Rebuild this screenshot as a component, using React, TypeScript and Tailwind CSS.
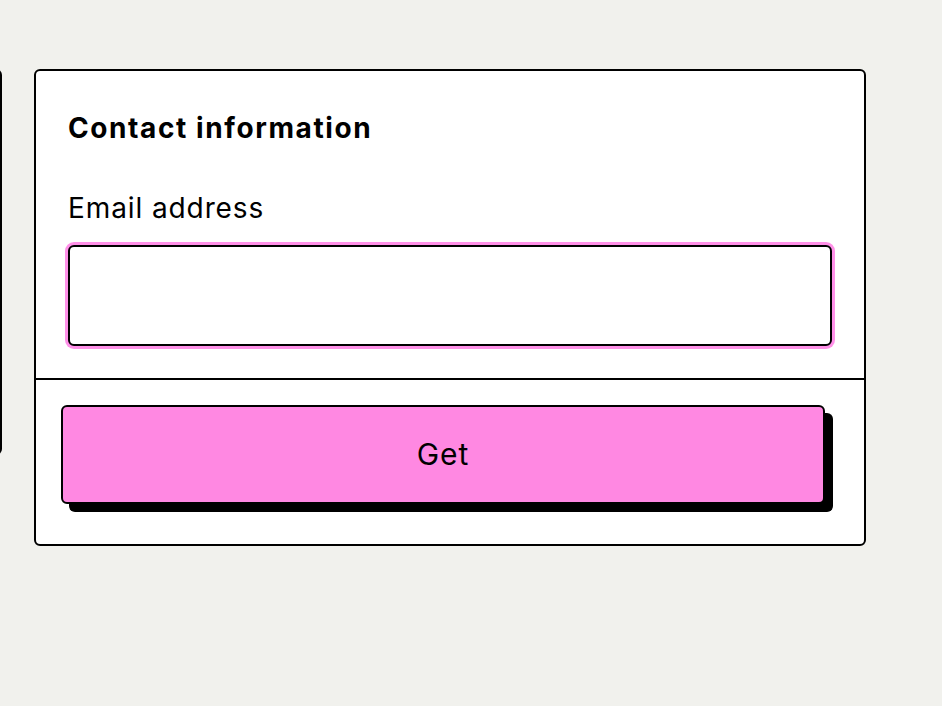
import { useState } from "react";

export default function App() {
  const [email, setEmail] = useState("");

  return (
    <div className="min-h-screen w-full overflow-hidden bg-[#f1f1ed] font-['Inter',sans-serif] text-black">
      <div className="flex items-start gap-[32px] pt-[69px]">
        {/* card partly off screen on the left */}
        <div className="-ml-[400px] h-[386px] w-[402px] shrink-0 rounded-md border-2 border-black bg-white" />

        <div className="w-[832px] shrink-0 rounded-md border-2 border-black bg-white">
          <div className="flex flex-col px-8 pt-8 pb-8">
            <h2 className="text-[28px] leading-[50px] font-bold tracking-[1.6px]">Contact information</h2>
            <label htmlFor="email" className="mt-[39px] text-[28px] leading-[32px] tracking-[0.9px]">
              Email address
            </label>
            <input
              id="email"
              type="email"
              value={email}
              onChange={(e) => setEmail(e.target.value)}
              className="mt-[21px] h-[101px] w-full rounded-md border-2 border-black bg-white px-4 text-[24px] outline-none ring-[3px] ring-[#ff90e8]"
            />
          </div>
          <div className="border-t-2 border-black px-8 pt-8 pb-[33px]">
            <button className="flex h-[99px] w-full -translate-x-[7px] -translate-y-[7px] items-center justify-center rounded-md border-2 border-black bg-[#ff88e2] text-[30px] tracking-[1px] shadow-[8px_8px_0_0_#000]">
              Get
            </button>
          </div>
        </div>
      </div>
    </div>
  );
}
